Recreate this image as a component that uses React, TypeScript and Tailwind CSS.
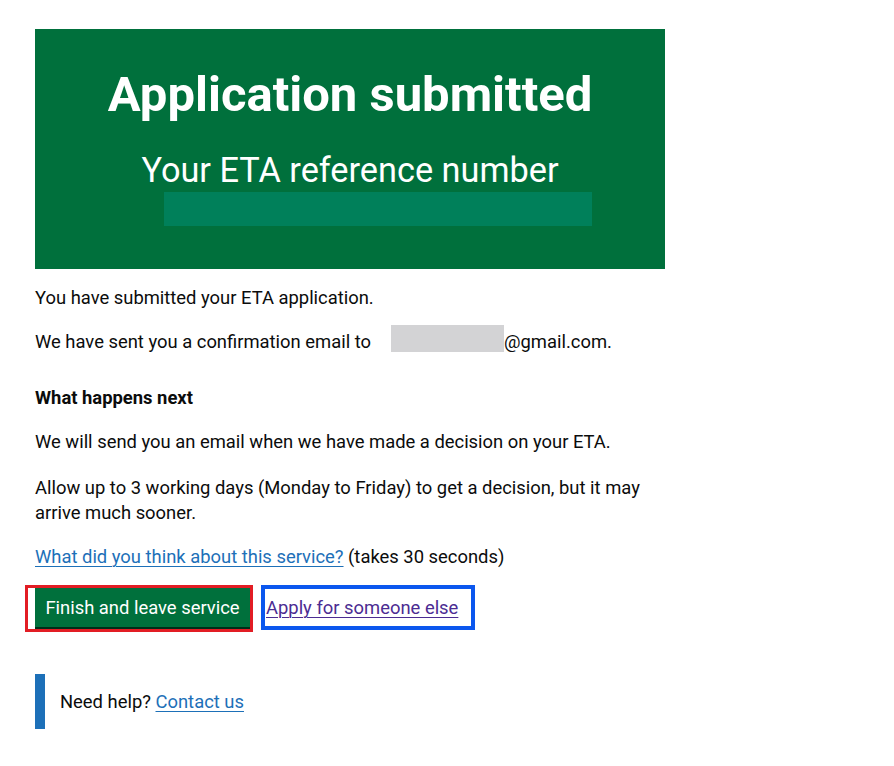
import React from "react";

/**
 * ETA confirmation page: green panel with the (redacted) reference number,
 * what happens next, and the two exit actions.
 */
export default function App() {
  return (
    <div className="min-h-screen bg-white pl-[35px] pt-[29px] font-['Roboto','Liberation_Sans',sans-serif] text-[18.4px] leading-[25px] text-[#0b0c0c]">
      <div className="w-[630px]">
        <Panel />

        <p className="mt-[16px]">You have submitted your ETA application.</p>

        <p className="mt-[19px] flex h-[25px] items-center">
          <span>We have sent you a confirmation email to</span>
          {/* email address is blanked out in the screenshot */}
          <span className="mb-[7px] ml-[20px] h-[27px] w-[113px] bg-[#d3d3d5]" />
          <span>@gmail.com.</span>
        </p>

        <h2 className="mt-[31px] font-bold">What happens next</h2>

        <p className="mt-[19px]">
          We will send you an email when we have made a decision on your ETA.
        </p>

        <p className="mt-[21px]">
          Allow up to 3 working days (Monday to Friday) to get a decision, but it may
          <br />
          arrive much sooner.
        </p>

        <p className="mt-[19px]">
          <a
            href="#"
            className="text-[#1d70b8] underline decoration-1 underline-offset-[3px]"
          >
            What did you think about this service?
          </a>{" "}
          (takes 30 seconds)
        </p>

        {/* the red / blue frames are highlight boxes around the two actions */}
        <div className="-ml-[10px] mt-[16px] flex items-start gap-[8px]">
          <div className="border-[3px] border-[#e21d24] pb-[2px] pl-[7px]">
            <button className="flex h-[39px] w-[215px] items-center justify-center whitespace-nowrap bg-[#00703c] text-white shadow-[0_2px_0_#002d18]">
              Finish and leave service
            </button>
          </div>
          <div className="flex h-[45px] w-[214px] items-center border-[4px] border-[#0b57ee] pl-[1px]">
            <a
              href="#"
              className="text-[#4c2c92] underline decoration-1 underline-offset-[3px]"
            >
              Apply for someone else
            </a>
          </div>
        </div>

        <div className="mt-[42px] flex h-[55px] items-center border-l-[10px] border-[#1d70b8] pl-[15px]">
          <span>
            Need help?{" "}
            <a
              href="#"
              className="text-[#1d70b8] underline decoration-1 underline-offset-[3px]"
            >
              Contact us
            </a>
          </span>
        </div>
      </div>
    </div>
  );
}

function Panel() {
  return (
    <div className="flex h-[240px] flex-col items-center bg-[#00703c] pt-[41px] text-white">
      <h1 className="text-[49px] font-bold leading-[50px]">Application submitted</h1>
      <p className="mt-[30px] text-[34.3px] leading-[40px]">Your ETA reference number</p>
      {/* reference number is blanked out in the screenshot */}
      <div className="ml-[56px] mt-[2px] h-[34px] w-[428px] bg-[#00805a]" />
    </div>
  );
}
